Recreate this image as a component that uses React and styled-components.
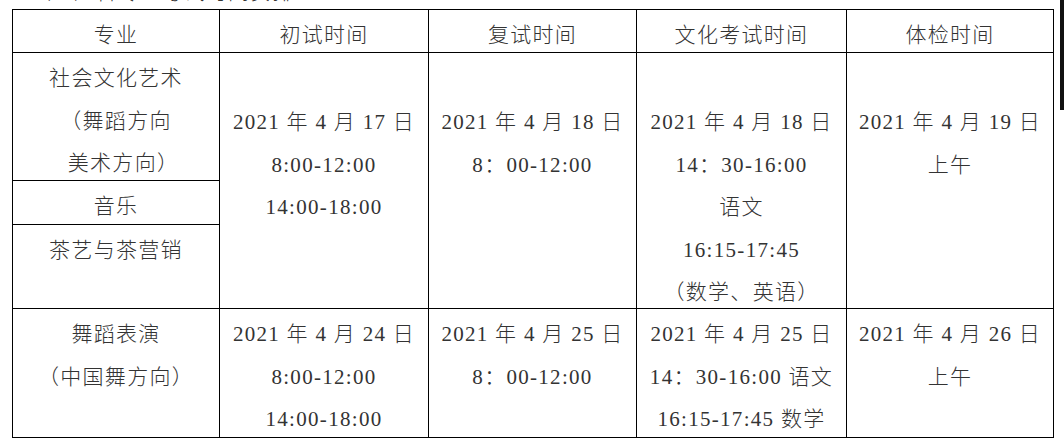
import React from "react";
import styled, { createGlobalStyle } from "styled-components";

const GlobalStyle = createGlobalStyle`
  html, body {
    margin: 0;
    padding: 0;
    background: #ffffff;
  }
  body {
    font-family: "Liberation Serif", "Noto Sans CJK SC", serif;
    font-weight: 300;
    color: #333333;
  }
`;

const header = ["专业", "初试时间", "复试时间", "文化考试时间", "体检时间"];

// 第一行专业栏被分成三格
const majorParts = [
  [{ text: "社会文化艺术" }, { text: "（舞蹈方向" }, { text: "美术方向）", indent: 15 }],
  [{ text: "音乐" }],
  [{ text: "茶艺与茶营销" }],
];

const firstRound = [
  ["2021 年 4 月 17 日", "8:00-12:00", "14:00-18:00"],
  ["2021 年 4 月 18 日", "8：00-12:00"],
  ["2021 年 4 月 18 日", "14：30-16:00", "语文", "16:15-17:45", "（数学、英语）"],
  ["2021 年 4 月 19 日", "上午"],
];

const secondRow = [
  ["舞蹈表演", "（中国舞方向）"],
  ["2021 年 4 月 24 日", "8:00-12:00", "14:00-18:00"],
  ["2021 年 4 月 25 日", "8：00-12:00"],
  ["2021 年 4 月 25 日", "14：30-16:00 语文", "16:15-17:45 数学"],
  ["2021 年 4 月 26 日", "上午"],
];

const App = () => {
  return (
    <>
      <GlobalStyle />
      <Page>
        <Main>
          <Caption>
            <CaptionText>（二）各专业考试时间安排：</CaptionText>
          </Caption>
          <Schedule>
            {header.map((title) => (
              <Cell key={title}>
                <Line>{title}</Line>
              </Cell>
            ))}

            <Cell $col={1}>
              {majorParts[0].map((line) => (
                <Line key={line.text} $indent={line.indent}>
                  {line.text}
                </Line>
              ))}
            </Cell>
            {firstRound.map((lines, i) => (
              <Cell key={i} $span={3} $top={48}>
                {lines.map((line) => (
                  <Line key={line}>{line}</Line>
                ))}
              </Cell>
            ))}
            <Cell $col={1}>
              <Line>{majorParts[1][0].text}</Line>
            </Cell>
            <Cell $col={1}>
              <Line>{majorParts[2][0].text}</Line>
            </Cell>

            {secondRow.map((lines, i) => (
              <Cell key={`r2-${i}`}>
                {lines.map((line) => (
                  <Line key={line}>{line}</Line>
                ))}
              </Cell>
            ))}
          </Schedule>
        </Main>
        <Edge />
      </Page>
    </>
  );
};

const Page = styled.div`
  display: flex;
  width: 1064px;
  height: 444px;
  overflow: hidden;
`;

const Main = styled.div`
  flex: none;
  padding-left: 12px;
`;

const Caption = styled.div`
  height: 9px;
  overflow: hidden;
`;

const CaptionText = styled.div`
  margin-top: -18px;
  padding-left: 18px;
  font-size: 21px;
  line-height: 21px;
  letter-spacing: 1px;
  white-space: nowrap;
`;

const Schedule = styled.div`
  display: grid;
  grid-template-columns: 207px 209px 208px 210px 207px;
  grid-template-rows: 43px 128px 44px 84px 129px;
  border-left: 1px solid #000;
  border-top: 1px solid #000;
  width: max-content;
`;

const Cell = styled.div`
  box-sizing: border-box;
  border-right: 1px solid #000;
  border-bottom: 1px solid #000;
  padding-top: ${(p) => p.$top ?? 4}px;
  text-align: center;
  grid-row: ${(p) => (p.$span ? `span ${p.$span}` : "auto")};
  grid-column: ${(p) => p.$col ?? "auto"};
`;

const Line = styled.div`
  padding-left: ${(p) => p.$indent ?? 0}px;
  font-size: 21px;
  line-height: 42.5px;
  letter-spacing: 1.3px;
  white-space: nowrap;
`;

const Edge = styled.div`
  flex: none;
  width: 4px;
  height: 110px;
  margin-left: auto;
  background: #111;
`;

export default App;
